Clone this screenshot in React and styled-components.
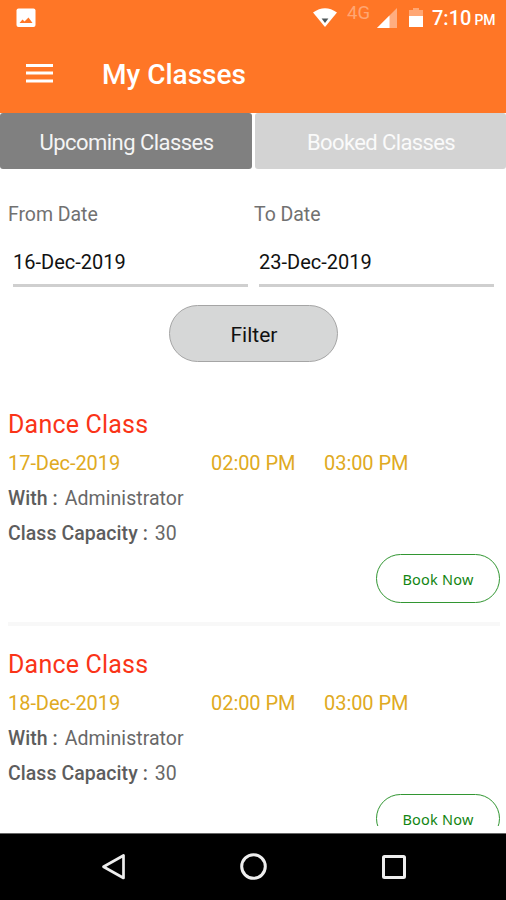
import React, { useState } from 'react';
import styled, { createGlobalStyle } from 'styled-components';

const GlobalStyle = createGlobalStyle`
	* {
		box-sizing: border-box;
	}

	body {
		margin: 0;
		background: #fff;
		font-family: Roboto, 'Noto Sans', sans-serif;
	}

	button {
		font-family: inherit;
		cursor: pointer;
	}
`;

const Screen = styled.div`
	display: flex;
	flex-direction: column;
	width: 506px;
	height: 900px;
	overflow: hidden;
	background: #fff;
`;

const StatusBar = styled.div`
	display: flex;
	justify-content: space-between;
	align-items: center;
	height: 36px;
	padding: 0 10px 0 16px;
	background: #ff7626;
`;

const StatusIcons = styled.div`
	display: flex;
	align-items: center;
`;

const Network = styled.span`
	width: 25px;
	margin: -10px 5px 0 10px;
	color: #ffa673;
	font-size: 18.5px;
	line-height: 20px;
`;

const Clock = styled.span`
	width: 64px;
	margin: 2px 0 0 9px;
	color: #fff;
	font-size: 20px;
	font-weight: 500;
	line-height: 24px;
	white-space: nowrap;

	small {
		margin-left: 3px;
		font-size: 14px;
	}
`;

const AppBar = styled.header`
	display: flex;
	align-items: center;
	gap: 49px;
	height: 77px;
	padding: 0 26px 2px;
	background: #ff7626;
`;

const MenuButton = styled.button`
	display: flex;
	padding: 0;
	border: none;
	background: none;
`;

const Title = styled.h1`
	margin: 3px 0 0;
	color: #fff;
	font-size: 28px;
	font-weight: 500;
	line-height: 36px;
`;

const TabList = styled.div`
	display: grid;
	grid-template-columns: 252px 1fr;
	gap: 3px;
	height: 56px;
`;

const Tab = styled.button`
	padding: 3px 0 0 1px;
	border: none;
	border-radius: 3px;
	background: ${props => props.$active ? '#808080' : '#d3d3d3'};
	color: ${props => props.$active ? '#f4f4f4' : '#fafafa'};
	font-size: 22px;
	letter-spacing: ${props => props.$active ? '-0.53px' : '-0.6px'};
`;

const FilterForm = styled.div`
	display: flex;
	flex-direction: column;
	align-items: center;
	height: 234px;
	padding-top: 34px;
`;

const DateFields = styled.div`
	display: grid;
	grid-template-columns: 246px 246px;
	width: 100%;
	padding-left: 8px;
`;

const Label = styled.div`
	color: #717171;
	font-size: 19.5px;
	line-height: 24px;
	letter-spacing: -0.05px;
`;

const DateValue = styled.div`
	height: 39px;
	margin: 21px 6px 0 5px;
	padding-top: 2px;
	border-bottom: 3px solid #cfcfcf;
	color: #111;
	font-size: 20px;
	line-height: 24px;
`;

const FilterButton = styled.button`
	width: 169px;
	height: 57px;
	margin-top: 18px;
	padding: 3px 0 0 2px;
	border: 1px solid #a5a5a5;
	border-radius: 29px;
	background: #d6d7d7;
	color: #111;
	font-size: 21px;
`;

const ClassList = styled.div`
	height: 423px;
	overflow: hidden;
	padding: 0 6px 0 8px;
`;

const Card = styled.article`
	display: flex;
	flex-direction: column;
	height: 240px;
`;

const ClassName = styled.h2`
	margin: 6px 0 0;
	color: #fa3418;
	font-size: 25px;
	font-weight: 400;
	line-height: 32px;
	letter-spacing: 0.2px;
`;

const Schedule = styled.div`
	display: grid;
	grid-template-columns: 203px 113px 1fr;
	margin: 10px 0 1px;
	color: #dfaa22;
	font-size: 20px;
	line-height: 24px;
	letter-spacing: -0.05px;
`;

const Detail = styled.div`
	margin-top: 11px;
	color: #686868;
	font-size: 19.5px;
	line-height: 24px;
	letter-spacing: 0.05px;

	strong {
		margin-right: 7px;
		color: #5d5d5d;
		font-weight: 500;
	}
`;

const BookButton = styled.button`
	align-self: flex-end;
	width: 124px;
	height: 49px;
	margin: 8px 0 19px;
	padding: 0;
	border: 1.5px solid #329632;
	border-radius: 25px;
	background: none;
	color: #128512;
	font-family: 'Noto Sans', sans-serif;
	font-size: 14.5px;
	line-height: 12px;
	letter-spacing: 0.2px;
`;

const Divider = styled.div`
	height: 4px;
	background: #f8f8f8;
`;

const NavigationBar = styled.nav`
	display: flex;
	justify-content: center;
	align-items: center;
	gap: 112px;
	height: 67px;
	margin-top: auto;
	padding-left: 2px;
	border-top: 1px solid #666;
	background: #000;
`;

const tabs = [
	{ id: 'upcoming', label: 'Upcoming Classes' },
	{ id: 'booked', label: 'Booked Classes' },
];

const classes = [
	{ name: 'Dance Class', date: '17-Dec-2019', start: '02:00 PM', end: '03:00 PM', teacher: 'Administrator', capacity: 30 },
	{ name: 'Dance Class', date: '18-Dec-2019', start: '02:00 PM', end: '03:00 PM', teacher: 'Administrator', capacity: 30 },
];

const PictureIcon = () => (
	<svg width="20" height="20" viewBox="0 0 20 20">
		<rect x="0.5" y="0.5" width="19" height="18.5" rx="2" fill="#fff" />
		<path d="M3.5 15 6.5 11.5l2 2L12.5 9.5l4 5.5z" fill="#ff7626" />
	</svg>
);

const WifiIcon = () => (
	<svg width="24" height="20" viewBox="0 0 24 20">
		<path d="M0 4.5Q12-4 24 4.5L12 19z" fill="#fff" />
		<path d="M8.6 10.5h6.8L12 15z" fill="#4f5659" />
	</svg>
);

const SignalIcon = () => (
	<svg width="20" height="20" viewBox="0 0 20 20">
		<path d="M0 20 20 0v20z" fill="#ffad80" />
		<path d="M0 20 12.5 7.5V20z" fill="#fff" />
	</svg>
);

const BatterySvg = styled.svg`
	margin-left: 12px;
`;

const BatteryIcon = () => (
	<BatterySvg width="14" height="20" viewBox="0 0 14 20">
		<path d="M0 2h4V0h6v2h4v6H0z" fill="#ffa673" />
		<path d="M0 8h14v11H0z" fill="#fff" />
	</BatterySvg>
);

const ClassCard = ({ item }) => (
	<Card>
		<ClassName>{item.name}</ClassName>
		<Schedule>
			<span>{item.date}</span>
			<span>{item.start}</span>
			<span>{item.end}</span>
		</Schedule>
		<Detail><strong>With :</strong>{item.teacher}</Detail>
		<Detail><strong>Class Capacity :</strong>{item.capacity}</Detail>
		<BookButton>Book Now</BookButton>
		<Divider />
	</Card>
);

const App = () => {
	const [activeTab, setActiveTab] = useState('upcoming');

	return (
		<Screen>
			<GlobalStyle />
			<StatusBar>
				<PictureIcon />
				<StatusIcons>
					<WifiIcon />
					<Network>4G</Network>
					<SignalIcon />
					<BatteryIcon />
					<Clock>7:10<small>PM</small></Clock>
				</StatusIcons>
			</StatusBar>

			<AppBar>
				<MenuButton aria-label="Menu">
					<svg width="27" height="20" viewBox="0 0 27 20">
						<path d="M0 1.5h27M0 9h27M0 17h27" stroke="#fff" strokeWidth="3" />
					</svg>
				</MenuButton>
				<Title>My Classes</Title>
			</AppBar>

			<TabList>
				{tabs.map(tab => (
					<Tab
						key={tab.id}
						$active={activeTab === tab.id}
						onClick={() => setActiveTab(tab.id)}
					>
						{tab.label}
					</Tab>
				))}
			</TabList>

			<FilterForm>
				<DateFields>
					<div>
						<Label>From Date</Label>
						<DateValue>16-Dec-2019</DateValue>
					</div>
					<div>
						<Label>To Date</Label>
						<DateValue>23-Dec-2019</DateValue>
					</div>
				</DateFields>
				<FilterButton>Filter</FilterButton>
			</FilterForm>

			<ClassList>
				{classes.map(item => <ClassCard key={item.date} item={item} />)}
			</ClassList>

			{/* Android navigation buttons */}
			<NavigationBar>
				<svg width="28" height="28" viewBox="0 0 28 28">
					<path d="M23.5 2.5v22.5L3.5 13.7z" fill="none" stroke="#eee" strokeWidth="2.7" strokeLinejoin="round" />
				</svg>
				<svg width="28" height="28" viewBox="0 0 28 28">
					<circle cx="13.5" cy="13.5" r="11.8" fill="none" stroke="#eee" strokeWidth="3" />
				</svg>
				<svg width="28" height="28" viewBox="0 0 28 28">
					<rect x="3.5" y="3.5" width="21" height="21" rx="1" fill="none" stroke="#eee" strokeWidth="3" />
				</svg>
			</NavigationBar>
		</Screen>
	);
};

export default App;
